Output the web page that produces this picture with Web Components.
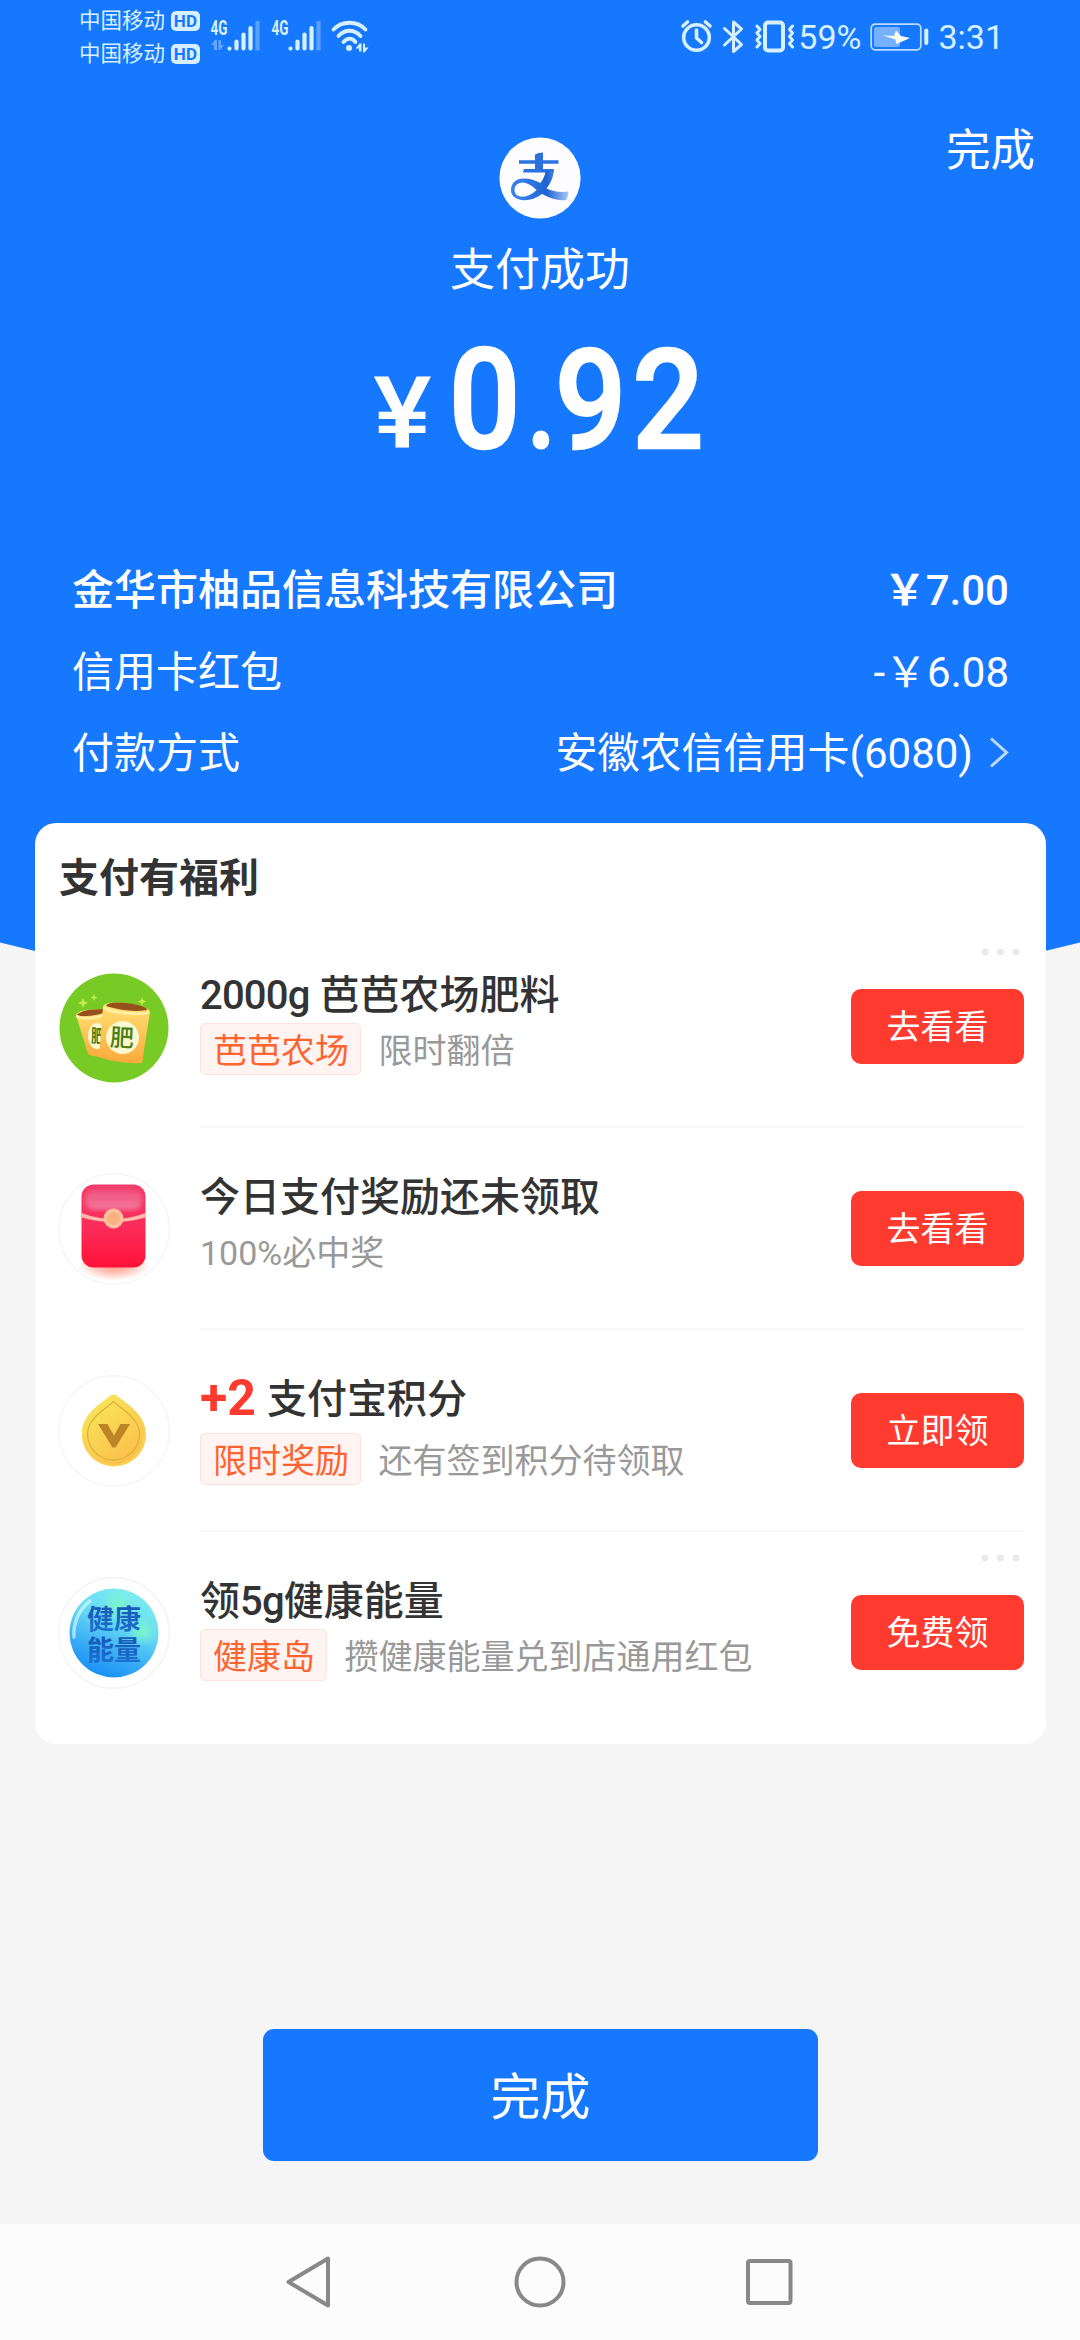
<!DOCTYPE html>
<html lang="zh-CN">
<head>
<meta charset="utf-8">
<title>支付成功</title>
<style>
html,body{margin:0;padding:0}
body{width:1080px;height:2340px;background:#f5f5f5;font-family:Roboto,"Noto Sans CJK SC",sans-serif;overflow:hidden}
</style>
</head>
<body>
<pay-page></pay-page>
<script>
const define = (name, html) => {
  const tpl = document.createElement('template');
  tpl.innerHTML = html;
  customElements.define(name, class extends HTMLElement {
    constructor() {
      super();
      this.attachShadow({ mode: 'open' }).append(tpl.content.cloneNode(true));
    }
  });
};

define('signal-icon', `
<style>:host{display:block}svg{display:block}:host(:not([data])) .data{display:none}</style>
<svg width="52" height="34" viewBox="0 0 52 34">
  <text x="0.5" y="16.6" font-size="20" font-weight="700" textLength="17" lengthAdjust="spacingAndGlyphs" fill="currentColor">4G</text>
  <g class="data" opacity=".4" fill="currentColor"><path d="M1 27l4-5h2v10H4v-5zM14 27l-4 5H8.500V22h2.500v5z"/></g>
  <g stroke="currentColor" stroke-width="4.200" stroke-linecap="round"><path d="M19.500 30.500v.1M26.500 23.500v7M33.500 16.500v14M40.500 10v20.500"/><path d="M47.500 3v29.500" opacity=".35" stroke-linecap="butt"/></g>
</svg>`);

define('carrier-label', `
<style>:host{display:flex;align-items:center;height:33px;gap:6px;font-size:21.500px;line-height:33px;white-space:nowrap}
i{font:700 17px/20px Roboto,sans-serif;letter-spacing:.3px;width:29px;height:20px;border-radius:5px;background:#d6efff;color:#1677ff;text-align:center;box-sizing:border-box}
</style><span><slot></slot></span><i>HD</i>`);

define('status-bar', `
<style>
:host{display:flex;justify-content:space-between;height:72px;padding:4px 76px 0 79px;box-sizing:border-box;color:#d6f0ff}
.left,.right{display:flex;align-items:flex-start}
.sig{margin:14px 0 0 10px}.sig2{margin:14px 0 0 9px}.wifi{margin:15px 0 0 7px}
svg{display:block}
.right{font-size:34px;line-height:66px;height:66px}
.right svg{margin-top:14px}
.alerts{margin-right:-2px}
.battery{margin-right:-1px}
</style>
<div class="left">
  <div><carrier-label>中国移动</carrier-label><carrier-label>中国移动</carrier-label></div>
  <signal-icon class="sig" data></signal-icon><signal-icon class="sig2"></signal-icon>
  <svg class="wifi" width="40" height="34" viewBox="0 0 40 34" fill="none" stroke="currentColor" stroke-width="3.800" stroke-linecap="round">
    <path d="M3.500 10.500C12 1.500 27 1.500 35.500 10.500M8.500 17C15 10 24 10 30.500 17M13.500 23c4-4.500 8.500-4.500 12 0"/>
    <circle cx="19" cy="29" r="3" fill="currentColor" stroke="none"/>
    <path d="M25.500 29.500l4-5h2v8h-2.500v-3zM38.500 28.500l-4 5h-1.500v-9h2v4z" fill="currentColor" stroke="none"/>
  </svg>
</div>
<div class="right">
  <svg class="alerts" width="120" height="40" viewBox="0 0 120 40" fill="none" stroke="currentColor" stroke-linecap="round" stroke-linejoin="round">
    <g stroke-width="3.600"><circle cx="16.500" cy="19.500" r="12.800"/><path d="M16.500 12v8l5 4.500M3 8l4.500-4M30 8l-4.500-4"/></g>
    <path stroke-width="3" d="M44.500 10.500L61.500 26.500L53.500 33.500V4L61.500 11L44.500 27"/>
    <g stroke-width="4"><rect x="85" y="4.500" width="18" height="28" rx="3"/></g>
    <g stroke-width="3"><path d="M77 8l3 3.500-3 3.500 3 3.500-3 3.500 3 3.500-3 3.500M112.500 8l-3 3.500 3 3.500-3 3.500 3 3.500-3 3.500 3 3.500"/></g>
  </svg>
  <span>59%</span>
  <svg class="battery" width="78" height="40" viewBox="0 0 78 40">
    <rect x="10.200" y="6.200" width="49.600" height="25.600" rx="4" fill="none" stroke="currentColor" stroke-width="1.700" opacity=".85"/>
    <rect x="13" y="9" width="26" height="20" rx="2" fill="#fff" opacity=".42"/>
    <path d="M22 17.500l11 .5 2-5.500 5 5.500 9 2-13.500 6-1-4.500z" fill="#fff"/>
    <path d="M65.300 12.500v12.500" stroke="currentColor" stroke-width="4" stroke-linecap="round"/>
  </svg>
  <span>3:31</span>
</div>`);

define('alipay-logo', `
<style>:host{display:block}svg{display:block}</style>
<svg width="82" height="82" viewBox="0 0 82 82">
  <defs><linearGradient id="g" x1="0" y1="0" x2="1" y2="0"><stop offset="0" stop-color="#3a82ea"/><stop offset=".4" stop-color="#2b74e0"/><stop offset=".62" stop-color="#1d63d2"/><stop offset="1" stop-color="#a9c8f6"/></linearGradient></defs>
  <circle cx="41" cy="41" r="40.600" fill="#fdfdff"/>
  <g fill="#2a73de"><path d="M36 17.500q3-2 8-2V35h-8z"/><path d="M20 23.200h39.500v3.600H20zM25 32h29.800v3.500H24z"/></g>
  <path fill="url(#g)" fill-rule="evenodd" d="M46.500 34h8.300C54 42 51 47 47.500 51.500 54 54.500 61 55.500 69.500 54.500 69 58 68.500 61.500 67 63 59 64 51 61.500 43 57 36 62 29 64 23 63 16 62 12 58.500 12 53 12 46 17 41.500 25 41.500 31 41.500 36.500 43.500 41.500 46 44 42.500 46 39 46.500 34zM15.500 53C15.500 57.500 19 60 24 59.700 29.500 59.400 34 56.500 37.500 53 33 48.500 28.500 46 24 45.500 19 45.500 15.500 48.500 15.500 53z"/>
</svg>`);

define('bill-row', `
<style>
:host{display:flex;justify-content:space-between;height:81.500px;line-height:81.500px;font-size:42px;white-space:nowrap}
:host([strong]){font-weight:500}
</style><slot name="label"></slot><slot name="value"></slot>`);

define('pay-header', `
<style>
:host{display:block;height:1010px;background:#1677ff;color:#fff;clip-path:path('M0 0H1080V942.500L1045 951Q540 1050 35 951L0 942.500Z')}
.top{display:grid;grid-template-columns:1fr auto 1fr;height:148px;padding-right:45px}
.logo{grid-column:2;margin:65px -45px 0 0}
.done{grid-column:3;justify-self:end;font-size:44.500px;line-height:60px;margin-top:49px}
.state{text-align:center;font-size:45px;line-height:60px;margin-top:21px}
.amount{display:flex;height:150px;line-height:150px;font-weight:500;font-size:140px;margin:24px 0 0 364px;align-items:baseline}
.amount span{display:flex;justify-content:center;transform:scaleX(.9);-webkit-text-stroke:2.500px #fff}
.amount .yen{font-size:100px;width:77px;transform:scaleX(1.1);-webkit-text-stroke:0}
.n0{width:87px}.amount .dot{width:27px;transform:scaleX(.82);-webkit-text-stroke:1px #fff}.n9{width:71px}.n2{width:84px}
.bill{padding:0 71px 0 72px;margin-top:75px}
.value{display:flex;align-items:center}
b{font-weight:700}
svg{margin-left:16px}
</style>
<status-bar></status-bar>
<div class="top"><alipay-logo class="logo"></alipay-logo><div class="done">完成</div></div>
<div class="state">支付成功</div>
<div class="amount"><span class="yen">¥</span><span class="n0">0</span><span class="dot">.</span><span class="n9">9</span><span class="n2">2</span></div>
<div class="bill">
  <bill-row strong><span slot="label">金华市柚品信息科技有限公司</span><span slot="value"><b>￥</b>7.00</span></bill-row>
  <bill-row><span slot="label">信用卡红包</span><span slot="value">-￥6.08</span></bill-row>
  <bill-row><span slot="label">付款方式</span><span slot="value" class="value">安徽农信信用卡(6080)<svg width="20" height="34" viewBox="0 0 20 34" fill="none" stroke="#fff" stroke-opacity=".72" stroke-width="3"><path d="M2 1.500L17.500 15.500 2 29.500"/></svg></span></bill-row>
</div>`);

define('offer-tag', `
<style>:host{display:block;box-sizing:border-box;height:52px;padding:0 11px 0 12.500px;border:1.500px solid #fde3de;border-radius:5px;background:#fff4f2;color:#ff6430;font-size:34px;line-height:55px;margin:0 17.500px 0 -.500px}</style><slot></slot>`);

define('more-dots', `
<style>:host{display:block}svg{display:block}</style>
<svg width="42" height="8" viewBox="0 0 42 8" fill="#e9e9e9"><circle cx="5" cy="4" r="3.400"/><circle cx="20.500" cy="4" r="3.400"/><circle cx="36" cy="4" r="3.400"/></svg>`);

define('offer-row', `
<style>
:host{display:flex;height:202px;position:relative}
.icon{width:112px;height:112px;margin:45px 30px 0 23px;flex:none}
.main{flex:1;display:flex;margin-right:22px;border-bottom:2px solid #f7f7f7;height:200px}
:host([last]) .main{border-color:transparent}
.text{flex:1;padding-top:44px;white-space:nowrap}
.title{font-size:40px;line-height:52px;height:52px;font-weight:500;color:#333}
.sub{display:flex;height:52px;margin-top:var(--sub-gap,1px);font-size:34px;line-height:57px;color:#999}
.btn{width:173px;height:75px;margin:63px 0 0;border-radius:10px;background:#ff3b30;color:#fff;font-size:34px;line-height:77px;text-align:center;flex:none}
more-dots{position:absolute;right:24px;top:22px}
:host(:not([more])) more-dots{display:none}
</style>
<div class="icon"><slot name="icon"></slot></div>
<div class="main">
  <div class="text"><div class="title"><slot name="title"></slot></div><div class="sub"><slot name="tag"></slot><slot name="note"></slot></div></div>
  <div class="btn"><slot name="action"></slot></div>
</div>
<more-dots></more-dots>`);

define('farm-icon', `
<style>:host{display:block}svg{display:block}</style>
<svg width="112" height="112" viewBox="0 0 112 112">
  <defs><linearGradient id="b" x1="0" y1="0" x2="0" y2="1"><stop offset="0" stop-color="#ffe174"/><stop offset="1" stop-color="#fba93a"/></linearGradient></defs>
  <circle cx="56" cy="57" r="54.500" fill="#78cb25"/>
  <g fill="#c9e94a"><path d="M25 27l1.500 3.500L30 32l-3.500 1.500L25 37l-1.500-3.500L20 32l3.500-1.500zM36 23l1 2.500 2.500 1-2.500 1-1 2.500-1-2.500-2.500-1 2.500-1zM84 26l1 3 3 1.500-3 1.500-1 3-1-3-3-1.500 3-1.500z"/></g>
  <path d="M18 44q2-6 27-6l5 49q-14-1-20-4z" fill="url(#b)"/>
  <path d="M19 44q5-6 26-6l1 4q-15 4-26 3z" fill="#96501d"/>
  <path d="M18 45q13 5 28-1" fill="none" stroke="#fff0a0" stroke-width="2.500"/>
  <ellipse cx="39" cy="65" rx="9" ry="13" fill="#fdf8cf"/>
  <text x="33" y="71" font-size="17" font-weight="700" fill="#4a7e16" textLength="12" lengthAdjust="spacingAndGlyphs">肥</text>
  <path d="M45 36q0-6 22-4 25 4 25 9l-8 51q-24 1-43-6z" fill="url(#b)"/>
  <path d="M48 35q1-5 21-3 20 3 20 7-18 3-41-4z" fill="#96501d"/>
  <path d="M46 36q3 4 20 6 20 2 25-1" fill="none" stroke="#fff0a0" stroke-width="3"/>
  <circle cx="64.500" cy="66.500" r="16.500" fill="#fdf8cf"/>
  <text x="52" y="75.500" font-size="24" font-weight="500" fill="#4a7e16" transform="rotate(3 64 67)">肥</text>
</svg>`);

define('packet-icon', `
<style>:host{display:block}svg{display:block}</style>
<svg width="112" height="112" viewBox="0 0 112 112">
  <defs><linearGradient id="r" x1="0" y1="0" x2="0" y2="1"><stop offset="0" stop-color="#f23d6c"/><stop offset=".5" stop-color="#fb2c5b"/><stop offset="1" stop-color="#ff1237"/></linearGradient>
  <linearGradient id="t" x1="0" y1="0" x2="0" y2="1"><stop offset="0" stop-color="#f0527e"/><stop offset="1" stop-color="#f4789a"/></linearGradient>
  <radialGradient id="s"><stop offset="0" stop-color="#ff8e80"/><stop offset=".5" stop-color="#ffa898" stop-opacity=".7"/><stop offset="1" stop-color="#ffb8a0" stop-opacity="0"/></radialGradient>
  <filter id="f"><feGaussianBlur stdDeviation="2"/></filter></defs>
  <circle cx="56" cy="56" r="55.300" fill="#fff" stroke="#f5f5f5" stroke-width="1.400"/>
  <ellipse cx="56" cy="92" rx="36" ry="16" fill="url(#s)"/>
  <rect x="23.500" y="11.500" width="64" height="83" rx="12" fill="url(#r)"/>
  <rect x="27" y="17" width="57" height="20" rx="9" fill="url(#t)" filter="url(#f)"/>
  <path d="M23.500 40q32 12 64 0v4.500q-32 9-64 0z" fill="#ffb9ac"/>
  <circle cx="55.500" cy="45.500" r="10" fill="#ffc09c"/><circle cx="55.500" cy="45.500" r="6.500" fill="#f8b282"/>
</svg>`);

define('points-icon', `
<style>:host{display:block}svg{display:block}</style>
<svg width="112" height="112" viewBox="0 0 112 112">
  <defs><linearGradient id="y" x1="0" y1="0" x2=".6" y2="1"><stop offset="0" stop-color="#f7ec5e"/><stop offset="1" stop-color="#fbc14b"/></linearGradient></defs>
  <circle cx="56" cy="56" r="55.300" fill="#fff" stroke="#f5f5f5" stroke-width="1.400"/>
  <path d="M52.500 21.500q3.500-2.500 7 0C73 31.500 88 41 88 60a32 31.500 0 0 1-64 0C24 41 39 31.500 52.500 21.500z" fill="#f8cf50"/>
  <path d="M52.500 20.500q3-2 6 0C70 30.500 85.500 41 85.500 58a30.500 31 0 0 1-61.500 0C24 41 39 30.500 52.500 20.500z" fill="url(#y)"/>
  <path d="M55.500 26.500C64 35 81.500 43 81.500 59a26 26 0 0 1-52 0C29.500 43 47 35 55.500 26.500z" fill="none" stroke="#dfb03a" stroke-width="1.300"/>
  <path d="M40 49h9.500l6.500 11.500L62.500 49H72L57.500 72.500h-3z" fill="#bd8527"/>
</svg>`);

define('health-icon', `
<style>:host{display:block}svg{display:block}</style>
<svg width="112" height="112" viewBox="0 0 112 112">
  <defs><linearGradient id="h" x1=".2" y1="1" x2=".6" y2="0"><stop offset="0" stop-color="#118af5"/><stop offset=".3" stop-color="#36a9f5"/><stop offset=".65" stop-color="#66daf4"/><stop offset="1" stop-color="#7cecf0"/></linearGradient>
  <radialGradient id="m"><stop offset="0" stop-color="#7df5cb"/><stop offset="1" stop-color="#7df5cb" stop-opacity="0"/></radialGradient>
  <linearGradient id="c" x1="0" y1="0" x2="0" y2="1"><stop offset="0" stop-color="#1657b5"/><stop offset="1" stop-color="#1c74d2"/></linearGradient></defs>
  <circle cx="56" cy="56" r="55.300" fill="#fff" stroke="#f3f3f3" stroke-width="1.400"/>
  <circle cx="56" cy="56" r="44.500" fill="url(#h)"/>
  <circle cx="60" cy="29" r="17" fill="url(#m)"/><circle cx="84" cy="54" r="16" fill="url(#m)"/>
  <path d="M16 60A41 41 0 0 1 32 24" stroke="#d9faff" stroke-width="3.500" fill="none" opacity=".65" stroke-linecap="round"/>
  <g font-size="27" font-weight="700" fill="url(#c)"><text x="29" y="52">健康</text><text x="29" y="83">能量</text></g>
</svg>`);

define('offer-card', `
<style>
:host{display:block;position:relative;box-sizing:border-box;width:1011px;height:921px;margin:-187px 0 0 35px;background:#fff;border-radius:21px}
h2{margin:0;height:103px;padding-left:24px;font-size:40px;line-height:111px;font-weight:700;color:#333}
.gain{position:relative;top:2px;font-size:50px;font-weight:700;color:#ff3b30;line-height:40px;margin-right:1px}
.num{letter-spacing:-.8px}
</style>
<h2>支付有福利</h2>
<offer-row more><farm-icon slot="icon"></farm-icon><span slot="title"><span class="num">2000g</span> 芭芭农场肥料</span><offer-tag slot="tag">芭芭农场</offer-tag><span slot="note">限时翻倍</span><span slot="action">去看看</span></offer-row>
<offer-row><packet-icon slot="icon"></packet-icon><span slot="title">今日支付奖励还未领取</span><span slot="note">100%必中奖</span><span slot="action">去看看</span></offer-row>
<offer-row style="--sub-gap:7px"><points-icon slot="icon"></points-icon><span slot="title"><span class="gain">+2</span> 支付宝积分</span><offer-tag slot="tag">限时奖励</offer-tag><span slot="note">还有签到积分待领取</span><span slot="action">立即领</span></offer-row>
<offer-row more last><health-icon slot="icon"></health-icon><span slot="title">领<span class="num">5g</span>健康能量</span><offer-tag slot="tag">健康岛</offer-tag><span slot="note">攒健康能量兑到店通用红包</span><span slot="action">免费领</span></offer-row>`);

define('primary-button', `
<style>:host{display:block;width:555px;height:132px;border-radius:11px;background:#1677ff;color:#fff;font-size:50px;line-height:139px;text-align:center}</style><slot></slot>`);

define('nav-bar', `
<style>:host{display:flex;justify-content:center;align-items:center;gap:176px;height:116px;background:#fcfcfc}svg{display:block}</style>
<svg width="54" height="56" viewBox="0 0 54 56" fill="none" stroke="#888" stroke-width="4" stroke-linejoin="round"><path d="M5.500 28L45 4.500V51.500Z"/></svg>
<svg width="54" height="56" viewBox="0 0 54 56" fill="none" stroke="#888" stroke-width="4"><circle cx="27" cy="28" r="23.500"/></svg>
<svg width="54" height="56" viewBox="0 0 54 56" fill="none" stroke="#888" stroke-width="4"><rect x="5" y="7" width="42.500" height="42" rx="2"/></svg>`);

define('pay-page', `
<style>:host{display:flex;flex-direction:column;width:1080px;height:2340px}
pay-header,offer-card,primary-button,nav-bar{flex:none}
primary-button{margin:285px 0 0 263px}nav-bar{margin-top:auto}</style>
<pay-header></pay-header><offer-card></offer-card><primary-button>完成</primary-button><nav-bar></nav-bar>`);
</script>
</body>
</html>
